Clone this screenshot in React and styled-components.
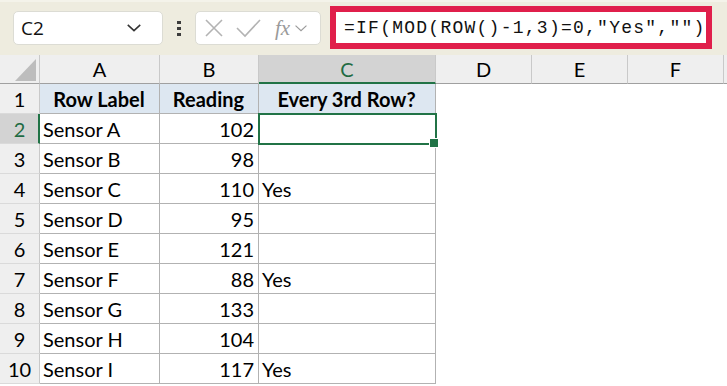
import React from "react";
import styled, { createGlobalStyle, css } from "styled-components";

const GlobalStyle = createGlobalStyle`
  * { box-sizing: border-box; }
  body {
    margin: 0;
    background: #ffffff;
    font-family: Lato, "Open Sans", sans-serif;
  }
`;

const Page = styled.div`
  width: 727px;
  height: 386px;
  overflow: hidden;
  background: #ffffff;
`;

const FormulaBar = styled.div`
  height: 55px;
  display: flex;
  align-items: flex-start;
  padding: 4px 0 0 13px;
  background: #eeecdf;
  border-top: 2px solid #f4f3ea;
`;

const NameBox = styled.div`
  width: 150px;
  height: 34px;
  margin-top: 5px;
  display: flex;
  align-items: center;
  justify-content: space-between;
  padding: 0 20px 0 7px;
  background: #ffffff;
  border: 1px solid #dcdcd4;
  border-radius: 5px;
  font-family: "Open Sans", sans-serif;
  font-size: 19px;
  color: #111;
`;

const Dots = styled.div`
  width: 32px;
  height: 34px;
  margin-top: 5px;
  display: flex;
  flex-direction: column;
  align-items: center;
  justify-content: center;
  gap: 3px;

  span {
    width: 4px;
    height: 3px;
    background: #3c3c3c;
  }
`;

const EditBox = styled.div`
  width: 126px;
  height: 34px;
  margin-top: 5px;
  display: flex;
  align-items: center;
  padding: 0 0 0 8px;
  gap: 12px;
  background: #ffffff;
  border: 1px solid #dcdcd4;
  border-radius: 5px;
`;

const Fx = styled.span`
  display: flex;
  align-items: center;
  gap: 4px;
  margin-left: 2px;
  font-family: "Liberation Serif", serif;
  font-style: italic;
  font-size: 21px;
  color: #9a9a9a;
`;

const FormulaBox = styled.div`
  width: 382px;
  height: 43px;
  margin-left: 9px;
  display: flex;
  align-items: center;
  padding: 0 0 0 8px;
  background: #ffffff;
  border: 6px solid #e01f4b;
  font-family: "Liberation Mono", monospace;
  font-size: 18px;
  letter-spacing: 1.25px;
  color: #111;
`;

const Sheet = styled.div`
  display: grid;
  grid-template-columns: 40px 120px 99px 177px repeat(3, 96px) 1fr;
  grid-template-rows: 29px;
  grid-auto-rows: 30px;
  font-family: Lato, "Open Sans", sans-serif;
  font-size: 20px;
  color: #000;
`;

const Corner = styled.div`
  position: relative;
  background: #efefef;
  border-right: 1px solid #c9c9c9;
  border-bottom: 1px solid #a0a0a0;

  &::after {
    content: "";
    position: absolute;
    right: 3px;
    bottom: 2px;
    border-left: 21px solid transparent;
    border-bottom: 22px solid #bdbdbd;
  }
`;

const ColHead = styled.div`
  display: flex;
  align-items: center;
  justify-content: center;
  background: ${(p) => (p.$active ? "#d3d3d3" : "#efefef")};
  color: ${(p) => (p.$active ? "#1f6b43" : "#000")};
  border-right: 1px solid #c9c9c9;
  border-bottom: ${(p) => (p.$active ? "2px solid #217346" : "1px solid #a0a0a0")};
  padding-top: ${(p) => (p.$active ? "1px" : "0")};
`;

const RowHead = styled.div`
  display: flex;
  align-items: center;
  justify-content: center;
  background: ${(p) => (p.$active ? "#d3d3d3" : "#efefef")};
  color: ${(p) => (p.$active ? "#1f6b43" : "#000")};
  border-right: ${(p) => (p.$active ? "2px solid #217346" : "1px solid #c9c9c9")};
  border-bottom: 1px solid #dadada;
  padding-left: ${(p) => (p.$active ? "1px" : "0")};
`;

const Cell = styled.div`
  position: relative;
  display: flex;
  align-items: center;
  justify-content: ${(p) => p.$align || "flex-start"};
  padding: 0 4px 0 3px;
  white-space: nowrap;
  background: ${(p) => (p.$head ? "#dde7f1" : "#ffffff")};
  font-weight: ${(p) => (p.$head ? 700 : 400)};
  ${(p) =>
    p.$table &&
    css`
      border-right: 1px solid #b2b2b2;
      border-bottom: 1px solid #b2b2b2;
    `}
  ${(p) =>
    p.$selected &&
    css`
      &::before {
        content: "";
        position: absolute;
        left: -1px;
        top: -1px;
        right: -2px;
        bottom: -2px;
        border: 2px solid #217346;
        z-index: 1;
      }
      &::after {
        content: "";
        position: absolute;
        right: -4px;
        bottom: -5px;
        width: 8px;
        height: 8px;
        background: #217346;
        border: 1px solid #ffffff;
        z-index: 2;
      }
    `}
`;

const columns = ["A", "B", "C", "D", "E", "F", ""];

const rows = [
  ["Sensor A", 102, ""],
  ["Sensor B", 98, ""],
  ["Sensor C", 110, "Yes"],
  ["Sensor D", 95, ""],
  ["Sensor E", 121, ""],
  ["Sensor F", 88, "Yes"],
  ["Sensor G", 133, ""],
  ["Sensor H", 104, ""],
  ["Sensor I", 117, "Yes"],
];

const Chevron = ({ size = 16, color = "#333", width = 1.6 }) => (
  <svg width={size} height={size * 0.6} viewBox="0 0 16 10" fill="none">
    <polyline points="1.5 2 8 8 14.5 2" stroke={color} strokeWidth={width} />
  </svg>
);

const CancelIcon = () => (
  <svg width="20" height="20" viewBox="0 0 20 20" fill="none">
    <path d="M2 2 L18 18 M18 2 L2 18" stroke="#b3b3b3" strokeWidth="1.6" />
  </svg>
);

const EnterIcon = () => (
  <svg width="25" height="19" viewBox="0 0 25 19" fill="none">
    <polyline points="1 9 9 17 24 1" stroke="#b3b3b3" strokeWidth="1.6" />
  </svg>
);

const Blank = () => <Cell />;

export default function App() {
  return (
    <Page>
      <GlobalStyle />
      <FormulaBar>
        <NameBox>
          C2
          <Chevron />
        </NameBox>
        <Dots>
          <span />
          <span />
          <span />
        </Dots>
        <EditBox>
          <CancelIcon />
          <EnterIcon />
          <Fx>
            fx
            <Chevron size={14} color="#9a9a9a" width={1.4} />
          </Fx>
        </EditBox>
        <FormulaBox>=IF(MOD(ROW()-1,3)=0,"Yes","")</FormulaBox>
      </FormulaBar>

      <Sheet>
        <Corner />
        {columns.map((c, i) => (
          <ColHead key={i} $active={c === "C"}>
            {c}
          </ColHead>
        ))}

        <RowHead>1</RowHead>
        <Cell $table $head $align="center">Row Label</Cell>
        <Cell $table $head $align="center">Reading</Cell>
        <Cell $table $head $align="center">Every 3rd Row?</Cell>
        <Blank />
        <Blank />
        <Blank />
        <Blank />

        {rows.map(([label, reading, flag], i) => (
          <React.Fragment key={label}>
            <RowHead $active={i === 0}>{i + 2}</RowHead>
            <Cell $table>{label}</Cell>
            <Cell $table $align="flex-end">{reading}</Cell>
            <Cell $table $selected={i === 0}>{flag}</Cell>
            <Blank />
            <Blank />
            <Blank />
            <Blank />
          </React.Fragment>
        ))}
      </Sheet>
    </Page>
  );
}
